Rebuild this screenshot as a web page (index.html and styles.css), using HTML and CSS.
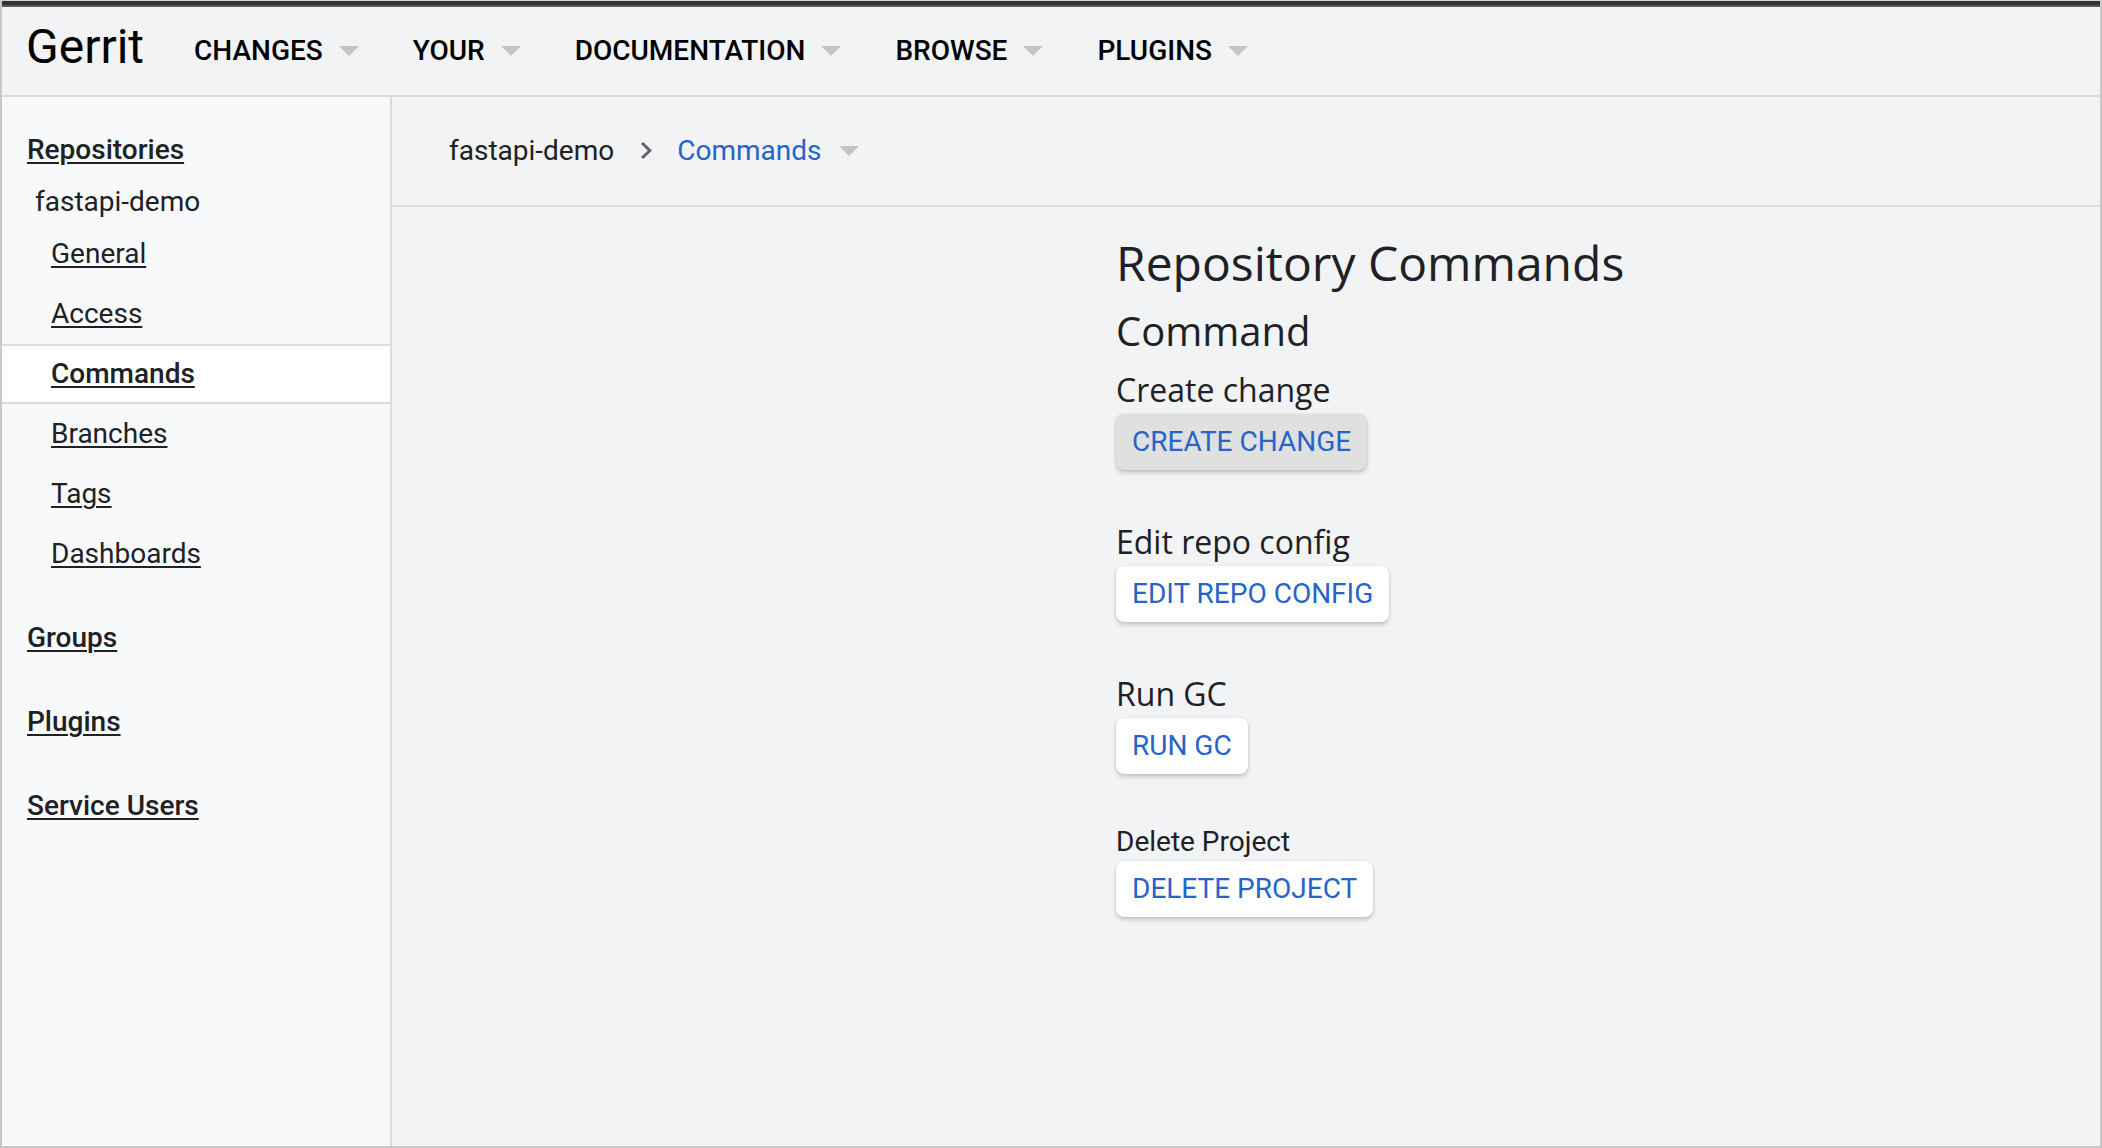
FILE: index.html
```html
<!DOCTYPE html>
<html lang="en">
<head>
<meta charset="utf-8">
<title>Gerrit - Repository Commands</title>
<link rel="stylesheet" href="styles.css">
</head>
<body>
<div class="window">
  <div class="topbar"></div>
  <header class="header">
    <span class="brand">Gerrit</span>
    <nav class="nav">
      <span class="nav-item">CHANGES<svg class="drop" viewBox="0 0 20 10"><path d="M0 0h20L10 10z"/></svg></span>
      <span class="nav-item">YOUR<svg class="drop" viewBox="0 0 20 10"><path d="M0 0h20L10 10z"/></svg></span>
      <span class="nav-item">DOCUMENTATION<svg class="drop" viewBox="0 0 20 10"><path d="M0 0h20L10 10z"/></svg></span>
      <span class="nav-item">BROWSE<svg class="drop" viewBox="0 0 20 10"><path d="M0 0h20L10 10z"/></svg></span>
      <span class="nav-item">PLUGINS<svg class="drop" viewBox="0 0 20 10"><path d="M0 0h20L10 10z"/></svg></span>
    </nav>
  </header>
  <div class="body">
    <aside class="sidebar">
      <div class="sect sect-repo">
        <a class="title">Repositories</a>
        <div class="repo">fastapi-demo</div>
        <ul class="subs">
          <li><a>General</a></li>
          <li><a>Access</a></li>
          <li class="selected"><a>Commands</a></li>
          <li><a>Branches</a></li>
          <li><a>Tags</a></li>
          <li><a>Dashboards</a></li>
        </ul>
      </div>
      <div class="sect"><a class="title">Groups</a></div>
      <div class="sect"><a class="title">Plugins</a></div>
      <div class="sect"><a class="title">Service Users</a></div>
    </aside>
    <main class="main">
      <div class="crumbs">
        <span class="crumb">fastapi-demo</span>
        <svg class="chev" viewBox="8.59 6 7.41 12" preserveAspectRatio="none"><path d="M10 6L8.59 7.41 13.17 12l-4.58 4.59L10 18l6-6z"/></svg>
        <span class="crumb current">Commands</span>
        <svg class="drop" viewBox="0 0 20 10"><path d="M0 0h20L10 10z"/></svg>
      </div>
      <section class="commands">
        <h1 class="h1">Repository Commands</h1>
        <h2 class="h2">Command</h2>
        <div class="cmd">
          <h3 class="h3">Create change</h3>
          <button class="btn pressed">CREATE CHANGE</button>
        </div>
        <div class="cmd">
          <h3 class="h3">Edit repo config</h3>
          <button class="btn">EDIT REPO CONFIG</button>
        </div>
        <div class="cmd">
          <h3 class="h3">Run GC</h3>
          <button class="btn">RUN GC</button>
        </div>
        <div class="cmd">
          <div class="plain-label">Delete Project</div>
          <button class="btn">DELETE PROJECT</button>
        </div>
      </section>
    </main>
  </div>
</div>
</body>
</html>
```

FILE: styles.css
```css
html, body {
  margin: 0;
  padding: 0;
}

body {
  width: 2102px;
  height: 1148px;
  overflow: hidden;
  font-family: Roboto, "Liberation Sans", sans-serif;
  color: #202124;
  background: #f1f3f4;
}

.window {
  box-sizing: border-box;
  height: 1148px;
  border: 2px solid #c8c8c8;
  border-top: 1px solid #d4d4d4;
  display: flex;
  flex-direction: column;
}

.topbar {
  flex: none;
  height: 6px;
  background: linear-gradient(#333333 0, #333333 4px, #58585b 4px, #58585b 6px);
}

.header {
  flex: none;
  height: 88px;
  background: #f1f3f4;
  border-bottom: 2px solid #dadce0;
  display: flex;
  align-items: center;
  padding-left: 24px;
}

.brand {
  font-size: 48px;
  line-height: 48px;
  margin-top: -9px;
  margin-right: 50px;
  color: #000;
}

.nav {
  display: flex;
  align-items: center;
  gap: 54px;
}

.nav-item {
  display: flex;
  align-items: center;
  gap: 16px;
  font-size: 28px;
  font-weight: 500;
  line-height: 32px;
  color: #000;
}

.drop {
  width: 20px;
  height: 10px;
  fill: #c4c4c4;
  flex: none;
}

.body {
  flex: 1;
  display: flex;
  min-height: 0;
}

.sidebar {
  flex: none;
  width: 388px;
  background: #f8f9fa;
  border-right: 2px solid #dadce0;
  padding-top: 27px;
}

.title {
  display: block;
  font-size: 28px;
  font-weight: 500;
  line-height: 52px;
  padding-left: 25px;
  color: #202124;
  text-decoration: underline;
  text-decoration-thickness: 2px;
  text-underline-offset: 3px;
}

.repo {
  font-size: 28px;
  line-height: 44px;
  padding-top: 4px;
  padding-left: 33px;
}

.subs {
  list-style: none;
  margin: 0 0 28px;
  padding: 0;
}

.subs li {
  border-top: 2px solid transparent;
  border-bottom: 2px solid transparent;
  line-height: 56px;
  padding-left: 49px;
  font-size: 28px;
}

.subs a {
  color: #202124;
  text-decoration: underline;
  text-decoration-thickness: 2px;
  text-underline-offset: 3px;
}

.subs li.selected {
  background: #ffffff;
  border-color: #dadce0;
}

.subs li.selected a {
  font-weight: 500;
}

.sect {
  margin-bottom: 32px;
}

.sect-repo {
  margin-bottom: 0;
}

.main {
  flex: 1;
  background: #f1f3f4;
}

.crumbs {
  box-sizing: border-box;
  height: 110px;
  border-bottom: 2px solid #dadce0;
  display: flex;
  align-items: center;
  padding-left: 57px;
  padding-bottom: 1px;
  font-size: 28px;
}

.crumb {
  color: #202124;
}

.crumb.current {
  color: #2664c8;
  margin-right: 17px;
}

.chev {
  width: 11px;
  height: 17px;
  fill: #5f6368;
  margin: 0 25px 0 27px;
}

.commands {
  padding: 24px 0 0 724px;
}

.h1 {
  font-family: "Open Sans", "Liberation Sans", sans-serif;
  font-size: 48px;
  font-weight: 400;
  line-height: 64px;
  margin: 0 0 8px;
}

.h2 {
  font-family: "Open Sans", "Liberation Sans", sans-serif;
  font-size: 40px;
  font-weight: 400;
  line-height: 56px;
  margin: 0 0 7px;
}

.cmd {
  margin-bottom: 48px;
}

.h3 {
  font-family: "Open Sans", "Liberation Sans", sans-serif;
  font-size: 32px;
  font-weight: 400;
  line-height: 48px;
  margin: 0;
}

.plain-label {
  font-size: 28px;
  line-height: 39px;
}

.btn {
  display: block;
  height: 56px;
  padding: 0 16px;
  border: 0;
  border-radius: 8px;
  background: #ffffff;
  color: #2664c8;
  font-family: Roboto, "Liberation Sans", sans-serif;
  font-size: 28px;
  font-weight: 400;
  line-height: 56px;
  box-shadow: 0 3px 4px rgba(0, 0, 0, 0.18), 0 0 2px rgba(0, 0, 0, 0.12);
}

.btn.pressed {
  background: #e0e0e0;
}
```
